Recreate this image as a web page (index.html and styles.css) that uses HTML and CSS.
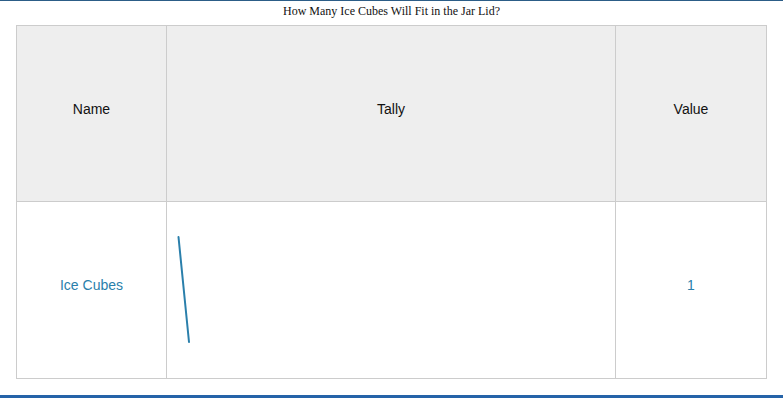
FILE: index.html
```html
<!DOCTYPE html>
<html>
<head>
<meta charset="utf-8">
<link rel="stylesheet" href="styles.css">
</head>
<body>
<div class="page">
  <div class="top-bar"></div>
  <div class="title">How Many Ice Cubes Will Fit in the Jar Lid?</div>
  <div class="wrap">
    <table class="tally-table">
      <thead>
        <tr>
          <th class="col-name">Name</th>
          <th class="col-tally">Tally</th>
          <th class="col-value">Value</th>
        </tr>
      </thead>
      <tbody>
        <tr>
          <td class="name">Ice Cubes</td>
          <td class="tally">
            <svg class="tally-svg" width="448" height="176" viewBox="0 0 448 176">
              <line x1="11.5" y1="35" x2="22" y2="140" stroke="#2a7fab" stroke-width="2" stroke-linecap="round"/>
            </svg>
          </td>
          <td class="value">1</td>
        </tr>
      </tbody>
    </table>
  </div>
  <div class="bottom-bar"></div>
</div>
</body>
</html>
```

FILE: styles.css
```css
html, body {
  margin: 0;
  padding: 0;
  background: #ffffff;
}
.page {
  width: 783px;
  height: 398px;
  display: flex;
  flex-direction: column;
  position: relative;
}
.top-bar {
  height: 1px;
  background: #2c5d87;
}
.title {
  font-family: "Liberation Serif", "Times New Roman", serif;
  font-size: 12px;
  color: #111;
  text-align: center;
  line-height: 16px;
  height: 16px;
  margin-top: 2px;
}
.wrap {
  padding: 6px 16px 0 16px;
  flex: 1;
}
.tally-table {
  border-collapse: collapse;
  width: 750px;
  table-layout: fixed;
  font-family: "Liberation Sans", Arial, sans-serif;
  font-size: 14px;
}
.tally-table th,
.tally-table td {
  border: 1px solid #cccccc;
  text-align: center;
  vertical-align: middle;
  padding: 0 0 10px 0;
}
.tally-table th {
  background: #eeeeee;
  color: #111;
  font-weight: normal;
  height: 165px;
}
.tally-table td {
  height: 166px;
  color: #2a7fab;
  background: #ffffff;
}
.col-name { width: 149px; }
.col-tally { width: 448px; }
.col-value { width: 150px; }
.tally-table td.tally {
  padding: 0;
  vertical-align: top;
  text-align: left;
}
.tally-svg {
  display: block;
}
.bottom-bar {
  height: 3px;
  background: #2563a8;
}
```
